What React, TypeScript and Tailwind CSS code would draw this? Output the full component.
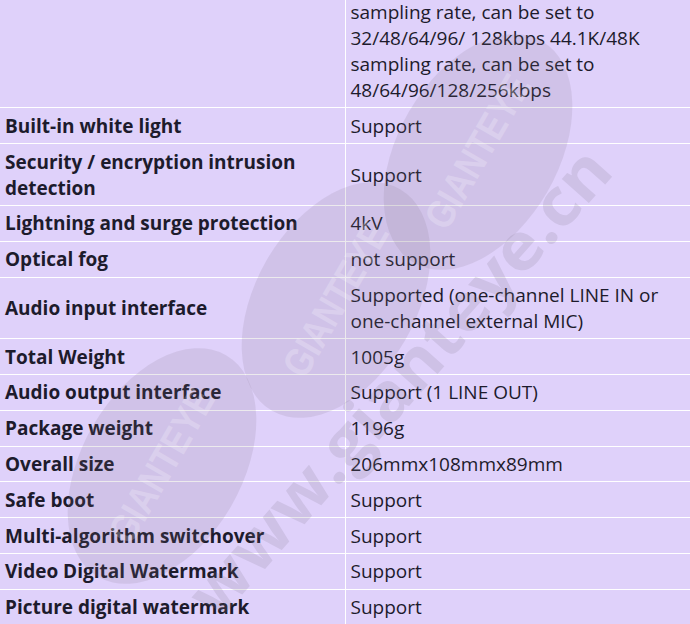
import React from "react";

type Row = { label: string; value: React.ReactNode; first?: boolean };

const rows: Row[] = [
  {
    label: "",
    value: (
      <>
        sampling rate, can be set to
        <br />
        32/48/64/96/ 128kbps 44.1K/48K
        <br />
        sampling rate, can be set to
        <br />
        48/64/96/128/256kbps
      </>
    ),
    first: true,
  },
  { label: "Built-in white light", value: "Support" },
  { label: "Security / encryption intrusion detection", value: "Support" },
  { label: "Lightning and surge protection", value: "4kV" },
  { label: "Optical fog", value: "not support" },
  {
    label: "Audio input interface",
    value: "Supported (one-channel LINE IN or one-channel external MIC)",
  },
  { label: "Total Weight", value: "1005g" },
  { label: "Audio output interface", value: "Support (1 LINE OUT)" },
  { label: "Package weight", value: "1196g" },
  { label: "Overall size", value: "206mmx108mmx89mm" },
  { label: "Safe boot", value: "Support" },
  { label: "Multi-algorithm switchover", value: "Support" },
  { label: "Video Digital Watermark", value: "Support" },
  { label: "Picture digital watermark", value: "Support" },
];

function Watermark() {
  const ellipses = [
    { cx: 478, cy: 152 },
    { cx: 336, cy: 300 },
    { cx: 162, cy: 466 },
  ];
  return (
    <svg
      className="pointer-events-none absolute left-0 top-0"
      width={690}
      height={624}
      viewBox="0 0 690 624"
    >
      {ellipses.map((e, i) => (
        <g key={i} transform={`rotate(-60 ${e.cx} ${e.cy})`}>
          <ellipse cx={e.cx} cy={e.cy} rx={128} ry={80} fill="#7d7488" opacity={0.15} />
          <text
            x={e.cx}
            y={e.cy + 13}
            textAnchor="middle"
            fontFamily="'Liberation Sans', Arial, sans-serif"
            fontWeight={700}
            fontSize={40}
            textLength={170}
            lengthAdjust="spacingAndGlyphs"
            fill="#ffffff"
            opacity={0.22}
          >
            GIANTEYE
          </text>
        </g>
      ))}
      <text
        x={0}
        y={0}
        transform="translate(218 622) rotate(-48.5)"
        fontFamily="'Open Sans', 'Liberation Sans', sans-serif"
        fontWeight={700}
        fontSize={66}
        textLength={600}
        lengthAdjust="spacingAndGlyphs"
        fill="#7d7488"
        opacity={0.17}
      >
        www.gianteye.cn
      </text>
    </svg>
  );
}

export default function App() {
  return (
    <div
      className="relative h-[624px] w-[690px] overflow-hidden bg-[#dfd1fa] text-[#1d1b2c]"
      style={{ fontFamily: "'Open Sans', 'Noto Sans', sans-serif" }}
    >
      <table className="-mt-px w-[690px] table-fixed border-collapse text-[19px] leading-[26px]">
        <colgroup>
          <col className="w-[345px]" />
          <col />
        </colgroup>
        <tbody>
          {rows.map((r, i) => (
            <tr key={i} className="border-b border-white">
              <td
                className={`border-r border-white pl-[5px] pr-2 align-middle font-bold ${
                  r.first ? "pt-0 pb-[4.4px]" : "py-[4.4px]"
                }`}
              >
                {r.label}
              </td>
              <td
                className={`pl-[5px] pr-2 align-middle ${
                  r.first ? "pt-0 pb-[4.4px]" : "py-[4.4px]"
                }`}
              >
                {r.value}
              </td>
            </tr>
          ))}
        </tbody>
      </table>
      <Watermark />
    </div>
  );
}
